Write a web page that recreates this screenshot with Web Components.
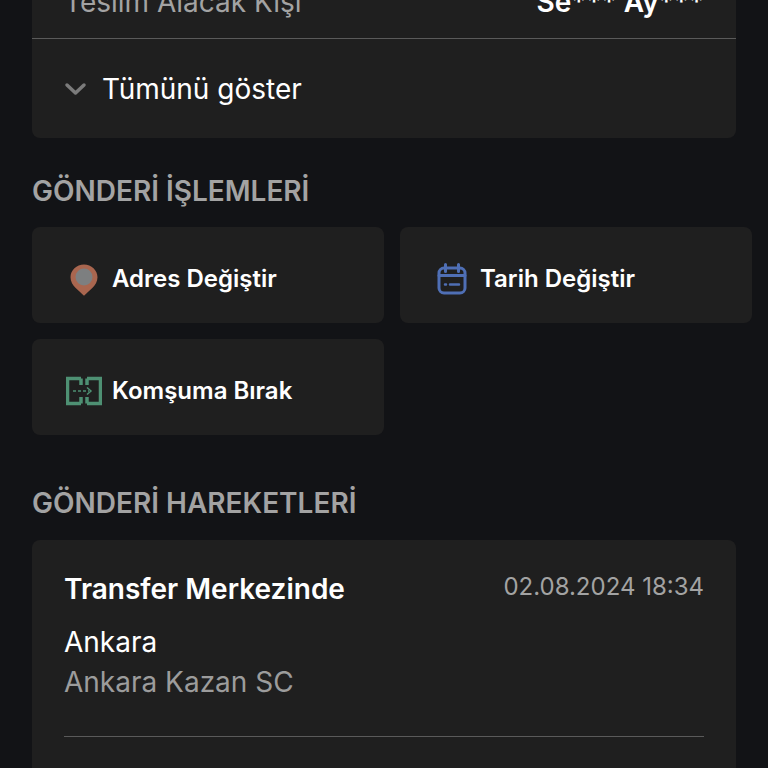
<!DOCTYPE html>
<html lang="tr">
<head>
<meta charset="utf-8">
<style>
  html, body { margin: 0; height: 768px; overflow: hidden; background: #121316; }
  body { font-family: Inter, "Liberation Sans", sans-serif; color: #fff; }
  shipment-page { margin-top: -21px; }
</style>
</head>
<body>
<shipment-page>
  <info-card>
    <info-row label="Teslim Alacak Kişi" value="Se*** Ay***"></info-row>
    <show-all>Tümünü göster</show-all>
  </info-card>

  <section-title style="margin-top:35px">GÖNDERİ İŞLEMLERİ</section-title>
  <action-grid>
    <action-button label="Adres Değiştir">
      <svg slot="icon" width="36" height="36" viewBox="0 0 36 36"><path d="M18 3.500c-7.500 0-13.500 5.700-13.500 12.800 0 4.400 2.300 7.800 5.200 10.800 2.800 2.800 6 5.300 8.300 7.700 2.300-2.400 5.500-4.900 8.300-7.700 2.900-3 5.200-6.400 5.200-10.800 0-7.100-6-12.800-13.500-12.800z" fill="#a9664f"/><circle cx="18" cy="16" r="8.500" fill="#7d7f80"/></svg>
    </action-button>
    <action-button label="Tarih Değiştir">
      <svg slot="icon" width="36" height="36" viewBox="0 0 36 36" fill="none" stroke="#4f6fb5" stroke-width="3" stroke-linecap="round"><rect x="5" y="7" width="26" height="25" rx="5"/><path d="M11.500 3.500v7M24.500 3.500v7M5 14.500h26"/><path d="M11 23.500h1M16 23.500h9" stroke-width="2.500"/></svg>
    </action-button>
    <action-button label="Komşuma Bırak">
      <svg slot="icon" width="36" height="36" viewBox="0 0 36 36" fill="none" stroke="#4e9073" stroke-width="3.500"><path d="M15 5.500H1.500v25H15M21 5.500h13.500v25H21"/><path d="M15 5.500v6.500M15 24v6.500M21 5.500v6.500M21 24v6.500"/><path d="M7 18h16" stroke-width="1.500" stroke-dasharray="3 2"/><path d="M21 14.500l4 3.500-4 3.500" stroke-width="1.500"/></svg>
    </action-button>
  </action-grid>

  <section-title style="margin-top:50px">GÖNDERİ HAREKETLERİ</section-title>
  <movement-card title="Transfer Merkezinde" date="02.08.2024 18:34" city="Ankara" place="Ankara Kazan SC"></movement-card>
</shipment-page>

<script>
class ShipmentPage extends HTMLElement {
  constructor() {
    super();
    this.attachShadow({ mode: "open" }).innerHTML = `
      <style>
        :host { display: flex; flex-direction: column; padding: 0 32px; }
      </style>
      <slot></slot>`;
  }
}

class InfoCard extends HTMLElement {
  constructor() {
    super();
    this.attachShadow({ mode: "open" }).innerHTML = `
      <style>
        :host { display: block; background: #1f1f1f; border-radius: 8px; }
      </style>
      <slot></slot>`;
  }
}

class InfoRow extends HTMLElement {
  constructor() {
    super();
    this.attachShadow({ mode: "open" }).innerHTML = `
      <style>
        :host { display: flex; justify-content: space-between; align-items: center; height: 60px; box-sizing: border-box; padding: 0 32px 13px; border-bottom: 1px solid #5a5a5a; font-size: 28px; }
        .label { color: #a3a3a3; }
        .value { font-weight: 600; color: #fff; }
      </style>
      <span class="label"></span><span class="value"></span>`;
  }
  connectedCallback() {
    this.shadowRoot.querySelector(".label").textContent = this.getAttribute("label");
    this.shadowRoot.querySelector(".value").textContent = this.getAttribute("value");
  }
}

class ShowAll extends HTMLElement {
  constructor() {
    super();
    this.attachShadow({ mode: "open" }).innerHTML = `
      <style>
        :host { display: flex; align-items: center; gap: 15px; height: 99px; padding: 0 32px; box-sizing: border-box; font-size: 28px; color: #fff; }
        svg { flex: none; }
      </style>
      <svg width="23" height="14" viewBox="0 0 23 14" fill="none" stroke="#7b7b7b" stroke-width="3.500" stroke-linecap="round" stroke-linejoin="round"><path d="M3 3l8.500 8L20 3"/></svg>
      <span><slot></slot></span>`;
  }
}

class SectionTitle extends HTMLElement {
  constructor() {
    super();
    this.attachShadow({ mode: "open" }).innerHTML = `
      <style>
        :host { display: block; font-size: 28px; line-height: 36px; font-weight: 600; color: #a3a3a3; }
      </style>
      <slot></slot>`;
  }
}

class ActionGrid extends HTMLElement {
  constructor() {
    super();
    this.attachShadow({ mode: "open" }).innerHTML = `
      <style>
        :host { display: grid; grid-template-columns: 352px 352px; gap: 16px; margin-top: 18px; }
      </style>
      <slot></slot>`;
  }
}

class ActionButton extends HTMLElement {
  constructor() {
    super();
    this.attachShadow({ mode: "open" }).innerHTML = `
      <style>
        :host { display: flex; align-items: center; gap: 10px; height: 96px; padding: 7px 32px 0 34px; box-sizing: border-box; background: #1f1f1f; border-radius: 8px; font-size: 24px; font-weight: 600; color: #fff; }
        .icon { width: 36px; height: 36px; display: flex; flex: none; }
      </style>
      <span class="icon"><slot name="icon"></slot></span><span class="label"></span>`;
  }
  connectedCallback() {
    this.shadowRoot.querySelector(".label").textContent = this.getAttribute("label");
  }
}

class MovementCard extends HTMLElement {
  constructor() {
    super();
    this.attachShadow({ mode: "open" }).innerHTML = `
      <style>
        :host { display: block; margin-top: 19px; padding: 32px 32px 0; height: 300px; box-sizing: border-box; background: #1f1f1f; border-radius: 8px; }
        .head { display: flex; justify-content: space-between; align-items: flex-start; }
        .title { font-size: 28px; line-height: 34px; font-weight: 600; color: #fff; }
        .date { margin-top: 1px; font-size: 24px; line-height: 28px; color: #a3a3a3; }
        .city { margin-top: 16px; font-size: 28px; line-height: 40px; color: #fff; }
        .place { font-size: 28px; line-height: 40px; color: #9c9c9c; }
        hr { margin: 34px 0 0; border: 0; height: 1px; background: #5a5a5a; }
      </style>
      <div class="head"><span class="title"></span><span class="date"></span></div>
      <div class="city"></div>
      <div class="place"></div>
      <hr>`;
  }
  connectedCallback() {
    const root = this.shadowRoot;
    for (const name of ["title", "date", "city", "place"]) {
      root.querySelector("." + name).textContent = this.getAttribute(name);
    }
  }
}

customElements.define("shipment-page", ShipmentPage);
customElements.define("info-card", InfoCard);
customElements.define("info-row", InfoRow);
customElements.define("show-all", ShowAll);
customElements.define("section-title", SectionTitle);
customElements.define("action-grid", ActionGrid);
customElements.define("action-button", ActionButton);
customElements.define("movement-card", MovementCard);
</script>
</body>
</html>
